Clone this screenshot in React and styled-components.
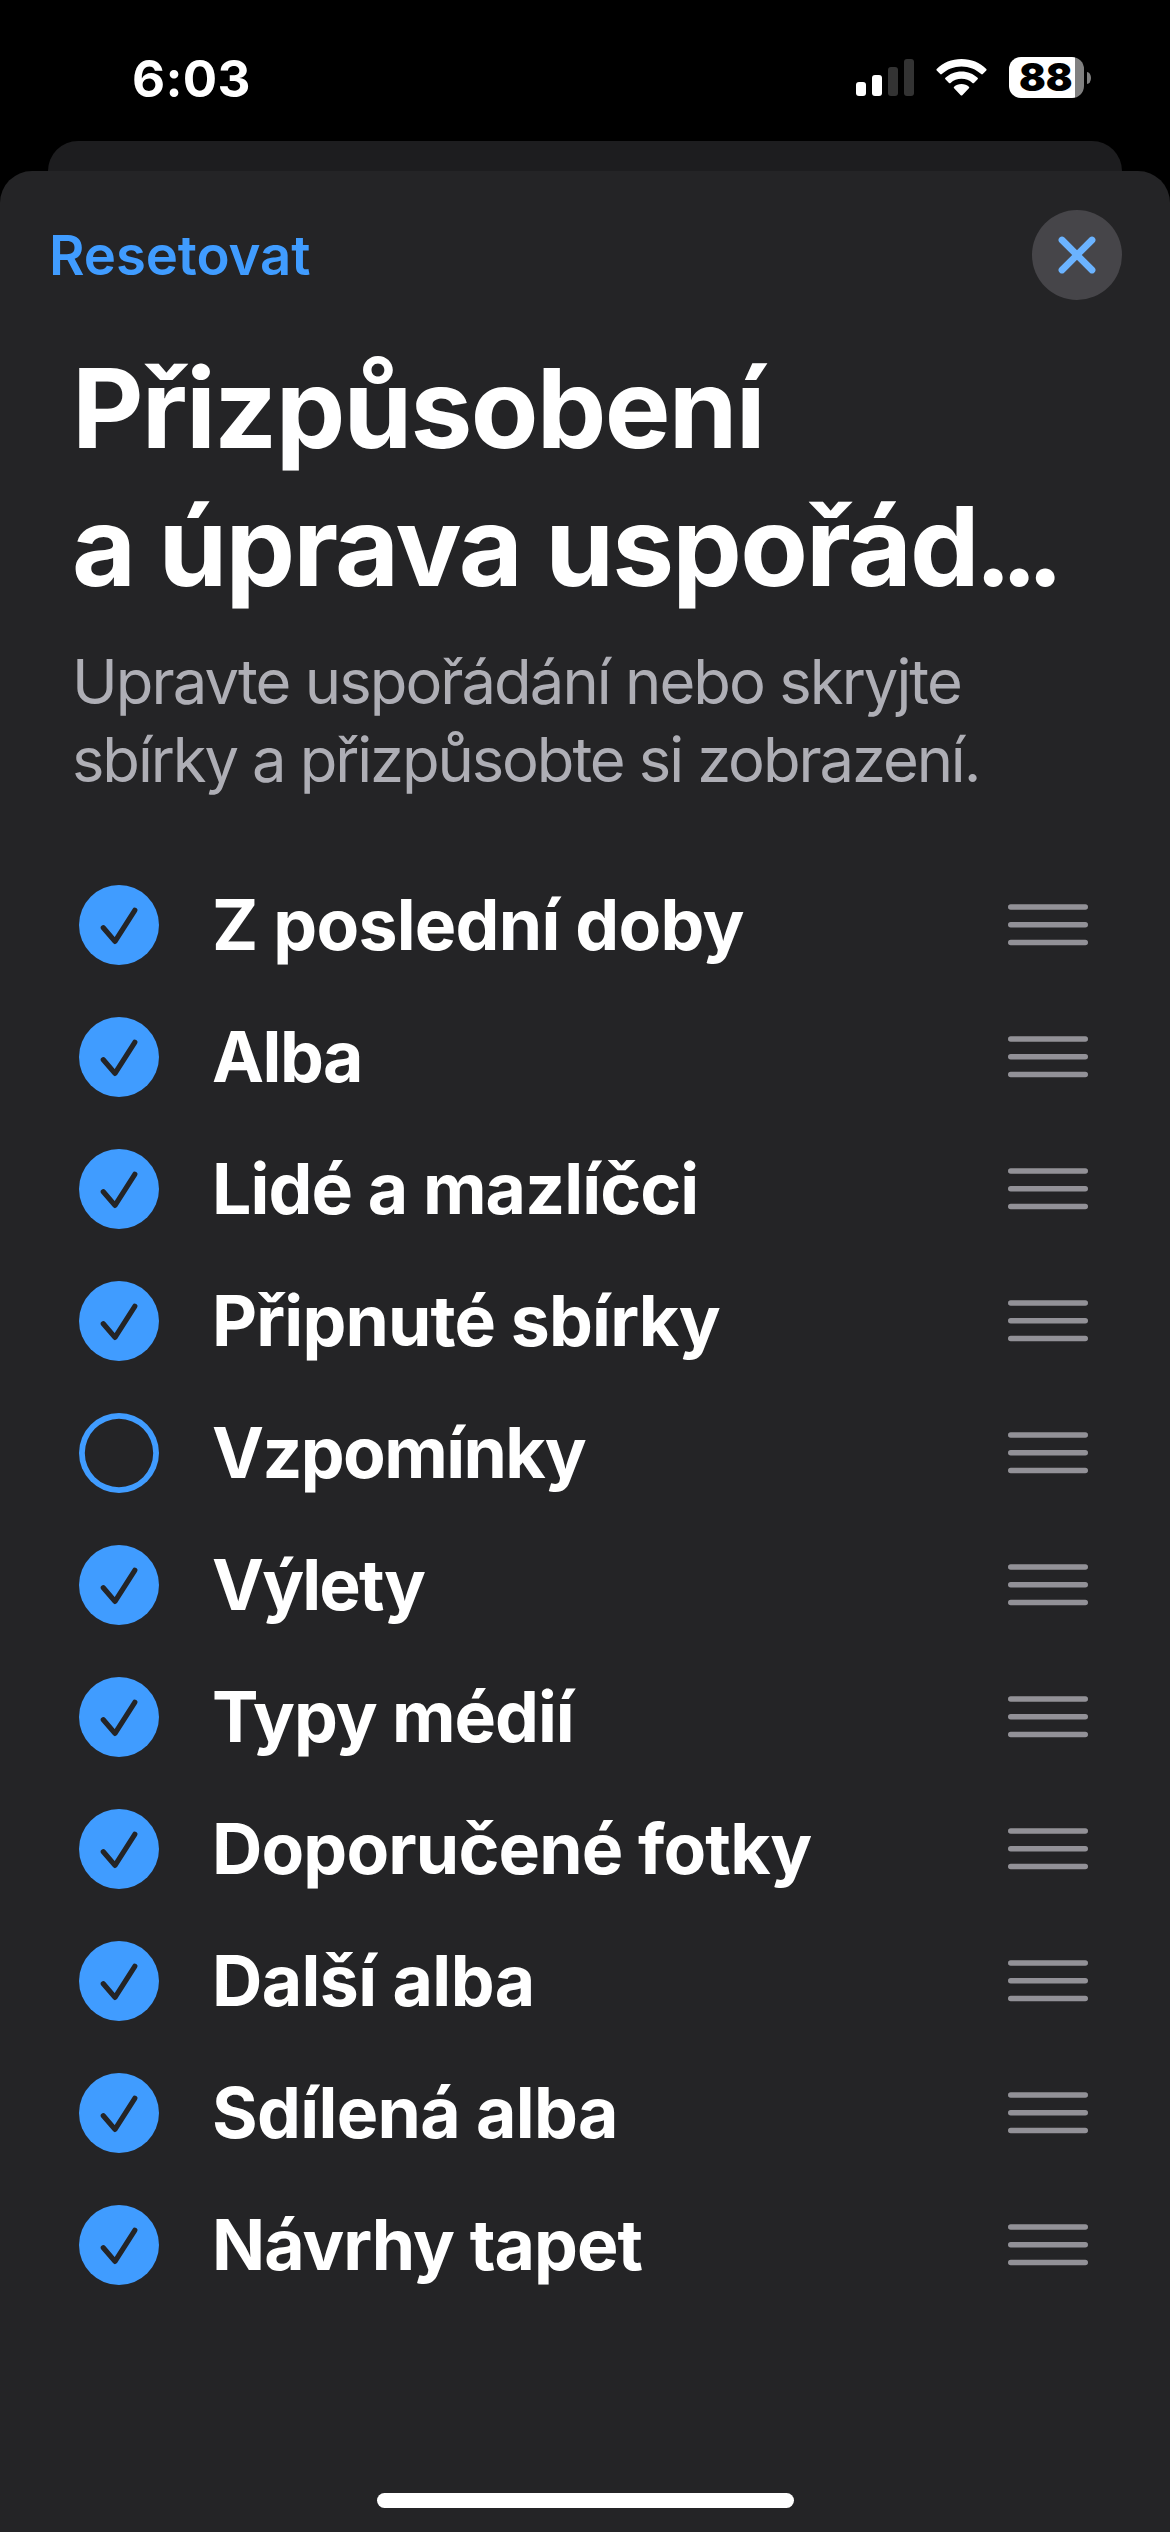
import React, {useState} from 'react';
import styled, {createGlobalStyle} from 'styled-components';

const sections = [
  {id: 'recent', label: 'Z poslední doby', tracking: '-0.75px', visible: true},
  {id: 'albums', label: 'Alba', tracking: '-1.5px', visible: true},
  {id: 'people', label: 'Lidé a mazlíčci', tracking: '-0.9px', visible: true},
  {id: 'pinned', label: 'Připnuté sbírky', tracking: '-0.85px', visible: true},
  {id: 'memories', label: 'Vzpomínky', tracking: '-1.6px', visible: false},
  {id: 'trips', label: 'Výlety', tracking: '-1.9px', visible: true},
  {id: 'media', label: 'Typy médií', tracking: '-1.05px', visible: true},
  {id: 'featured', label: 'Doporučené fotky', tracking: '-0.85px', visible: true},
  {id: 'more', label: 'Další alba', tracking: '-0.6px', visible: true},
  {id: 'shared', label: 'Sdílená alba', tracking: '-0.65px', visible: true},
  {id: 'wallpapers', label: 'Návrhy tapet', tracking: '-0.95px', visible: true},
];

function SignalIcon() {
  return (
    <svg width="58" height="37" viewBox="0 0 58 37" fill="#fff">
      <rect x="0" y="23" width="10" height="14" rx="3" />
      <rect x="16" y="16" width="10" height="21" rx="3" />
      <rect x="32" y="8" width="10" height="29" rx="3" fill="#333" />
      <rect x="48" y="0" width="10" height="37" rx="3" fill="#333" />
    </svg>
  );
}

function WifiIcon() {
  return (
    <svg width="51" height="37" viewBox="0 0 51 37" fill="#fff">
      <path d="M25.5 0C35.3 0 44 3.7 50.3 9.9Q51 10.7 50.3 11.5L46.8 15Q46 15.8 45.2 15C40 10.2 33.1 7.4 25.5 7.4S11 10.2 5.8 15Q5 15.8 4.2 15L.7 11.5Q0 10.7 .7 9.9C7 3.7 15.7 0 25.5 0Z" />
      <path d="M25.5 12.4C31.8 12.4 37.3 14.7 41.6 18.7Q42.4 19.5 41.6 20.3L38 23.9Q37.2 24.6 36.4 23.9C33.4 21.3 29.7 19.8 25.5 19.8S17.6 21.3 14.6 23.9Q13.8 24.6 13 23.9L9.4 20.3Q8.6 19.5 9.4 18.7C13.7 14.7 19.2 12.4 25.5 12.4Z" />
      <path d="M25.5 25.1C28.4 25.1 30.9 26 32.9 27.7Q33.7 28.5 32.9 29.3L26.3 36.2Q25.5 37 24.7 36.2L18.1 29.3Q17.3 28.5 18.1 27.7C20.1 26 22.6 25.1 25.5 25.1Z" />
    </svg>
  );
}

function CloseIcon() {
  return (
    <svg width="38" height="38" viewBox="0 0 38 38" fill="none" stroke="#6bb3ff" strokeWidth="6.8" strokeLinecap="round">
      <path d="M4 4L34 34M34 4L4 34" />
    </svg>
  );
}

function CheckIcon() {
  return (
    <svg width="80" height="80" viewBox="0 0 80 80" fill="none" stroke="#242426" strokeWidth="5.2" strokeLinecap="round" strokeLinejoin="round">
      <path d="M24.3 42.8L36 56.4L55.8 25.3" />
    </svg>
  );
}

function HandleIcon() {
  return (
    <svg width="80" height="42" viewBox="0 0 80 42" fill="none" stroke="#929197" strokeWidth="5.4" strokeLinecap="round">
      <path d="M2.7 3H77.3M2.7 20.8H77.3M2.7 38.5H77.3" />
    </svg>
  );
}

function App() {
  const [items, setItems] = useState(sections);

  const toggle = (id) => {
    setItems(items.map((item) => (item.id === id ? {...item, visible: !item.visible} : item)));
  };

  return (
    <>
      <GlobalStyle />
      <Screen>
        <StatusBar>
          <Time>6:03</Time>
          <StatusIcons>
            <SignalIcon />
            <WifiIcon />
            <Battery>
              <BatteryBody><span>88</span></BatteryBody>
              <BatteryTip />
            </Battery>
          </StatusIcons>
        </StatusBar>
        <BackSheet />
        <Sheet>
          <Toolbar>
            <ResetButton onClick={() => setItems(sections)}>Resetovat</ResetButton>
            <CloseButton aria-label="Zavřít"><CloseIcon /></CloseButton>
          </Toolbar>
          <Heading>
            <TextLine $tracking="-1.75px">Přizpůsobení</TextLine>
            <TextLine $tracking="-1.85px">a úprava uspořád<Dots>...</Dots></TextLine>
          </Heading>
          <Description>
            <TextLine $tracking="-1.95px">Upravte uspořádání nebo skryjte</TextLine>
            <TextLine $tracking="-2.1px">sbírky a přizpůsobte si zobrazení.</TextLine>
          </Description>
          <List>
            {items.map((item) => (
              <Row key={item.id}>
                <Toggle $checked={item.visible} aria-pressed={item.visible} onClick={() => toggle(item.id)}>
                  {item.visible && <CheckIcon />}
                </Toggle>
                <Label $tracking={item.tracking}>{item.label}</Label>
                <HandleIcon />
              </Row>
            ))}
          </List>
          <HomeIndicator />
        </Sheet>
      </Screen>
    </>
  );
}

const GlobalStyle = createGlobalStyle`
  * {
    box-sizing: border-box;
  }
  body {
    margin: 0;
    background: #000;
    color: #fff;
    font-family: Inter, 'Liberation Sans', sans-serif;
  }
  button {
    padding: 0;
    border: none;
    background: none;
    font-family: inherit;
  }
  svg {
    display: block;
    flex-shrink: 0;
  }
`;

const Screen = styled.div`
  display: flex;
  flex-direction: column;
  width: 1170px;
  height: 2532px;
  overflow: hidden;
  background: #000;
`;

const StatusBar = styled.header`
  display: flex;
  justify-content: space-between;
  align-items: flex-start;
  height: 141px;
  padding: 57px 79px 0 132px;
`;

const Time = styled.div`
  margin-top: 1px;
  font-size: 51px;
  font-weight: 700;
  line-height: 41px;
  letter-spacing: 0.3px;
`;

const StatusIcons = styled.div`
  display: flex;
  align-items: center;
  gap: 22px;
  height: 41px;
`;

const Battery = styled.div`
  display: flex;
  align-items: center;
  gap: 3px;
`;

const BatteryBody = styled.div`
  width: 75px;
  height: 41px;
  padding-left: 10px;
  border-radius: 12px;
  background: linear-gradient(to right, #fff 66px, #808080 66px);
  color: #000;
  font-size: 38px;
  font-weight: 900;
  line-height: 41px;
  span {
    display: inline-block;
    transform: scaleX(1.04);
    transform-origin: left;
  }
`;

const BatteryTip = styled.div`
  width: 4px;
  height: 12px;
  border-radius: 0 4px 4px 0 / 0 6px 6px 0;
  background: #808080;
`;

const BackSheet = styled.div`
  height: 30px;
  margin: 0 48px;
  border-radius: 30px 30px 0 0;
  background: #1d1d1f;
`;

const Sheet = styled.main`
  display: flex;
  flex: 1;
  flex-direction: column;
  border-radius: 32px 32px 0 0;
  background: #242426;
`;

const Toolbar = styled.div`
  display: flex;
  justify-content: space-between;
  align-items: center;
  padding: 39px 48px 0 49px;
`;

const ResetButton = styled.button`
  color: #409cff;
  font-size: 54.5px;
  font-weight: 600;
  line-height: 90px;
  letter-spacing: -0.1px;
`;

const CloseButton = styled.button`
  display: flex;
  align-items: center;
  justify-content: center;
  width: 90px;
  height: 90px;
  border-radius: 50%;
  background: #464549;
`;

const Heading = styled.h1`
  margin: 39px 0 0;
  padding-left: 72px;
  font-size: 110.5px;
  font-weight: 700;
  line-height: 138px;
  white-space: nowrap;
`;

const TextLine = styled.span`
  display: block;
  letter-spacing: ${(props) => props.$tracking};
`;

const Dots = styled.span`
  margin-left: -3px;
  letter-spacing: -11px;
`;

const Description = styled.p`
  margin: 28px 0 0;
  padding-left: 72px;
  color: #aeaeb5;
  font-size: 61.5px;
  font-weight: 400;
  line-height: 78px;
  white-space: nowrap;
`;

const List = styled.ul`
  margin: 60px 0 0;
  padding: 0 82px 0 79px;
  list-style: none;
`;

const Row = styled.li`
  display: flex;
  align-items: center;
  height: 132px;
`;

const Toggle = styled.button`
  width: 80px;
  height: 80px;
  border-radius: 50%;
  background: ${(props) => (props.$checked ? '#409cff' : 'transparent')};
  box-shadow: ${(props) => (props.$checked ? 'none' : 'inset 0 0 0 5.8px #409cff')};
`;

const Label = styled.span`
  flex: 1;
  margin-left: 53px;
  font-size: 69.7px;
  font-weight: 700;
  line-height: 84px;
  letter-spacing: ${(props) => props.$tracking};
  white-space: nowrap;
`;

const HomeIndicator = styled.div`
  align-self: center;
  width: 417px;
  height: 15px;
  margin: auto 0 24px;
  border-radius: 8px;
  background: #fff;
`;

export default App;
